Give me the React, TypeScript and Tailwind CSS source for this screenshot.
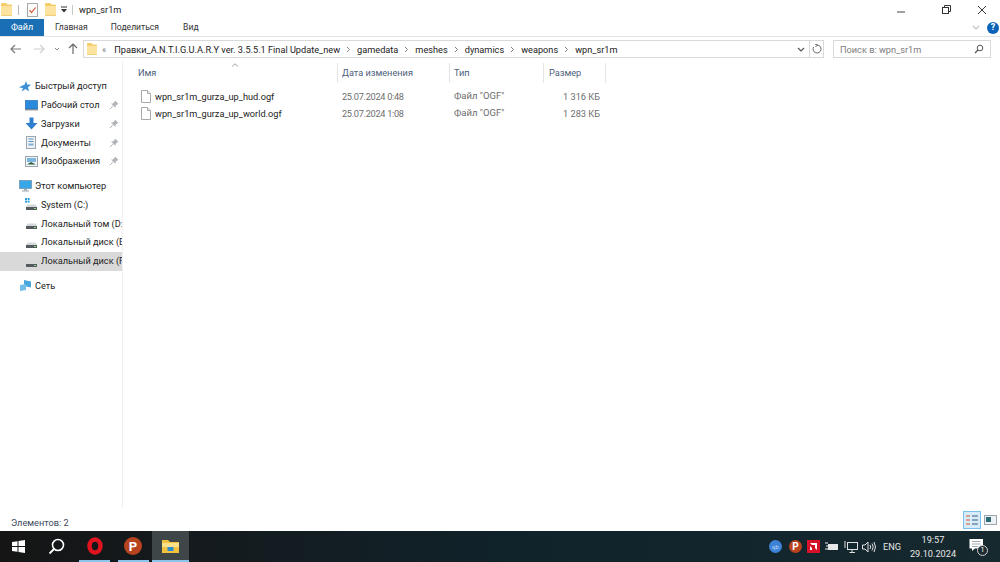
const font = { fontFamily: 'Roboto, "Noto Sans", sans-serif' };

const FolderIcon = ({ w = 11, h = 13 }: { w?: number; h?: number }) => (
  <svg width={w} height={h} viewBox="0 0 11 13" className="shrink-0" preserveAspectRatio="none">
    <path d="M0 1 Q0 0 1 0 H5 L6.5 1.5 H10 Q11 1.5 11 2.5 V13 H0 Z" fill="#f3cd68" />
    <path d="M0 3 H11 V12 Q11 13 10 13 H1 Q0 13 0 12 Z" fill="#fce4a0" />
    <path d="M0.5 12.6 H10.5" stroke="#e8c468" strokeWidth="0.8" />
  </svg>
);

const FileIcon = () => (
  <svg width="10" height="13" viewBox="0 0 10 13" className="shrink-0">
    <path d="M0.5 0.5 H6.5 L9.5 3.5 V12.5 H0.5 Z" fill="#ffffff" stroke="#a8a8a8" />
    <path d="M6.5 0.5 V3.5 H9.5" fill="#f0f0f0" stroke="#a8a8a8" />
  </svg>
);

const PinIcon = () => (
  <svg width="10" height="10" viewBox="0 0 10 10" className="shrink-0">
    <path d="M6 0.5 L9.5 4 L8 4.5 L6.5 6.2 L6.5 8 L2 3.5 L3.8 3.5 L5.5 2 Z" fill="#b0b4b8" />
    <path d="M3.8 6.2 L1 9" stroke="#b0b4b8" strokeWidth="1" />
  </svg>
);

const DriveIcon = ({ system }: { system?: boolean }) => (
  <svg width="13" height="13" viewBox="0 0 13 13" className="shrink-0">
    {system && (
      <g fill="#2b9fe0">
        <rect x="0" y="0" width="2" height="2" />
        <rect x="2.6" y="0" width="2" height="2" />
        <rect x="0" y="2.6" width="2" height="2" />
        <rect x="2.6" y="2.6" width="2" height="2" />
      </g>
    )}
    <path d="M2.5 6.5 L10.5 6.5 L12 9 H1 Z" fill="#d5d8da" />
    <rect x="1" y="9" width="11" height="3" fill="#555a5e" />
    <rect x="9" y="10" width="2" height="1" fill="#8fdc80" />
  </svg>
);

const Chevron = () => (
  <svg width="5" height="7" viewBox="0 0 5 7" className="shrink-0">
    <path d="M1 1 L3.5 3.5 L1 6" fill="none" stroke="#808080" strokeWidth="1" />
  </svg>
);

const DownChevron = ({ color = "#555555" }: { color?: string }) => (
  <svg width="8" height="5" viewBox="0 0 8 5" className="shrink-0">
    <path d="M1 1 L4 4 L7 1" fill="none" stroke={color} strokeWidth="1.2" />
  </svg>
);

const Crumb = ({ label }: { label: string }) => (
  <>
    <span className="mx-[6px]">
      <Chevron />
    </span>
    <span className="pt-[1px] text-[9.2px] text-[#222222]">{label}</span>
  </>
);

const NavItem = ({
  icon,
  label,
  pin,
  level = 1,
  active,
}: {
  icon: React.ReactNode;
  label: string;
  pin?: boolean;
  level?: 0 | 1;
  active?: boolean;
}) => (
  <div className={`flex h-[18.75px] items-center ${active ? "bg-[#d9d9d9]" : ""} ${level === 1 ? "pl-[25px]" : "pl-[19px]"}`}>
    <span className="flex w-[16px] shrink-0 items-center">{icon}</span>
    <span className="min-w-0 flex-1 overflow-hidden whitespace-nowrap text-[9.2px] text-[#222222]">{label}</span>
    {pin && (
      <span className="mr-[3px] flex w-[10px]">
        <PinIcon />
      </span>
    )}
  </div>
);

const App = () => {
  return (
    <div className="flex h-[562px] w-[1000px] flex-col overflow-hidden bg-white" style={font}>
      {/* title bar */}
      <div className="flex h-[19px] shrink-0 items-center pl-[1px]">
        <FolderIcon />
        <div className="ml-[6px] mr-[8px] h-[10px] w-px bg-[#b5b5b5]" />
        <svg width="11" height="14" viewBox="0 0 11 14" className="shrink-0">
          <rect x="0.5" y="0.5" width="10" height="13" fill="#fafafa" stroke="#a8a8a8" />
          <path d="M2.5 7 L4.5 9.5 L8.5 4.5" fill="none" stroke="#d9512c" strokeWidth="1.2" />
        </svg>
        <span className="ml-[7px] flex">
          <FolderIcon />
        </span>
        <svg width="6" height="7" viewBox="0 0 6 7" className="ml-[5px] shrink-0">
          <rect x="0" y="0.5" width="6" height="1" fill="#333333" />
          <path d="M0 3 H6 L3 6.5 Z" fill="#333333" />
        </svg>
        <div className="ml-[5px] mr-[6px] h-[10px] w-px bg-[#c8c8c8]" />
        <span className="pt-[1px] text-[9.2px] text-[#222222]">wpn_sr1m</span>
        <div className="ml-auto flex items-center">
          <svg width="34" height="12" viewBox="0 0 34 12" className="mr-[20px]">
            <path d="M9 8 H17" stroke="#444444" strokeWidth="1" />
          </svg>
          <svg width="9" height="9" viewBox="0 0 9 9" className="mr-[26px]">
            <rect x="0.5" y="2.5" width="6" height="6" fill="none" stroke="#333333" />
            <path d="M2.5 2.5 V0.5 H8.5 V6.5 H6.5" fill="none" stroke="#333333" />
          </svg>
          <svg width="10" height="10" viewBox="0 0 10 10" className="mr-[13px]">
            <path d="M1 1 L9 9 M9 1 L1 9" stroke="#333333" strokeWidth="1" />
          </svg>
        </div>
      </div>

      {/* ribbon tabs */}
      <div className="flex h-[18px] shrink-0 items-center border-b border-[#e3e3e3]">
        <div className="flex h-full w-[44px] items-center justify-center bg-[#1a6fb4] text-[9px] text-white">Файл</div>
        <span className="ml-[11px] text-[8.6px] text-[#333333]">Главная</span>
        <span className="ml-[23px] text-[8.6px] text-[#333333]">Поделиться</span>
        <span className="ml-[24px] text-[8.6px] text-[#333333]">Вид</span>
        <div className="ml-auto mr-[1px] flex items-center gap-[7px]">
          <DownChevron color="#c0c0c0" />
          <div className="flex h-[12px] w-[12px] items-center justify-center rounded-full bg-[#0a63b8] text-[9px] font-bold leading-none text-white">?</div>
        </div>
      </div>

      {/* address row */}
      <div className="flex h-[24px] shrink-0 items-center">
        <svg width="12" height="10" viewBox="0 0 12 10" className="ml-[10px] shrink-0">
          <path d="M5 1 L1 5 L5 9 M1 5 H11" fill="none" stroke="#7a7a7a" strokeWidth="1.2" />
        </svg>
        <svg width="12" height="10" viewBox="0 0 12 10" className="ml-[11px] shrink-0">
          <path d="M7 1 L11 5 L7 9 M11 5 H1" fill="none" stroke="#d0d0d0" strokeWidth="1.2" />
        </svg>
        <span className="ml-[9px]">
          <svg width="6" height="4" viewBox="0 0 6 4" className="block">
            <path d="M1 1 L3 3 L5 1" fill="none" stroke="#888888" strokeWidth="1" />
          </svg>
        </span>
        <svg width="10" height="12" viewBox="0 0 10 12" className="ml-[8px] shrink-0">
          <path d="M1 5 L5 1 L9 5 M5 1 V11" fill="none" stroke="#6a6a6a" strokeWidth="1.2" />
        </svg>
        <div className="ml-[5px] flex h-[18px] w-[741px] shrink-0 items-center border border-[#d9d9d9] pl-[3px]">
          <FolderIcon w={10} h={12} />
          <span className="ml-[5px] pt-[1px] text-[9.2px] text-[#7a7a7a]">«</span>
          <span className="ml-[8px] whitespace-nowrap pt-[1px] text-[9.2px] text-[#222222]">Правки_A.N.T.I.G.U.A.R.Y ver. 3.5.5.1 Final Update_new</span>
          <Crumb label="gamedata" />
          <Crumb label="meshes" />
          <Crumb label="dynamics" />
          <Crumb label="weapons" />
          <Crumb label="wpn_sr1m" />
          <span className="ml-auto mr-[4px]"><DownChevron /></span>
          <div className="flex h-full w-[14px] items-center justify-center border-l border-[#d9d9d9]">
            <svg width="10" height="10" viewBox="0 0 10 10">
              <path d="M5 1 A4 4 0 1 1 1.6 3" fill="none" stroke="#666666" strokeWidth="1" />
              <path d="M3 0 L5.5 1 L3.5 3" fill="none" stroke="#666666" strokeWidth="1" />
            </svg>
          </div>
        </div>
        <div className="ml-[9px] flex h-[18px] w-[158px] shrink-0 items-center border border-[#d9d9d9] pl-[6px] pr-[6px]">
          <span className="pt-[1px] text-[9.2px] text-[#7d7d7d]">Поиск в: wpn_sr1m</span>
          <svg width="10" height="10" viewBox="0 0 10 10" className="ml-auto">
            <circle cx="6" cy="4" r="2.8" fill="none" stroke="#555555" />
            <path d="M4 6 L1 9" stroke="#555555" strokeWidth="1.2" />
          </svg>
        </div>
      </div>

      {/* body */}
      <div className="flex min-h-0 flex-1">
        <div className="w-[123px] shrink-0 border-r border-[#f0f0f0] pt-[16px]">
          <NavItem
            level={0}
            label="Быстрый доступ"
            icon={
              <svg width="12" height="11" viewBox="0 0 12 11">
                <path d="M7 0 L8.2 3.5 L12 3.8 L9 6.3 L10 10.5 L6.5 8 L2.5 10.5 L4 7 L0 6.5 L3.5 4.5 L5.5 3.8 Z" fill="#3d8fd6" />
              </svg>
            }
          />
          <NavItem
            pin
            label="Рабочий стол"
            icon={
              <svg width="13" height="11" viewBox="0 0 13 11">
                <rect x="0.5" y="0.5" width="12" height="8.5" fill="#2a8bdc" stroke="#1a64a8" strokeWidth="0.6" />
                <rect x="0" y="9" width="13" height="1.4" fill="#7f8f9c" />
              </svg>
            }
          />
          <NavItem
            pin
            label="Загрузки"
            icon={
              <svg width="13" height="13" viewBox="0 0 13 13">
                <path d="M4.5 0.5 H8.5 V6 H12.5 L6.5 12.5 L0.5 6 H4.5 Z" fill="#2f7fd0" />
              </svg>
            }
          />
          <NavItem
            pin
            label="Документы"
            icon={
              <svg width="11" height="13" viewBox="0 0 11 13">
                <rect x="1.5" y="0.5" width="9" height="12" fill="#eef2f5" stroke="#9aa7b2" />
                <rect x="3.5" y="2.5" width="5" height="1" fill="#5b93c2" />
                <rect x="3.5" y="5" width="5" height="1" fill="#5b93c2" />
                <rect x="3.5" y="7.5" width="5" height="2" fill="#7fb0d6" />
              </svg>
            }
          />
          <NavItem
            pin
            label="Изображения"
            icon={
              <svg width="13" height="11" viewBox="0 0 13 11">
                <rect x="0.5" y="0.5" width="12" height="10" fill="#f3f6f8" stroke="#9aa5ae" />
                <rect x="2" y="2" width="9" height="4" fill="#7ab6e0" />
                <path d="M2 8.5 L6 6 L11 8.5 Z" fill="#2c5e3f" />
              </svg>
            }
          />
          <div className="h-[6px]" />
          <NavItem
            level={0}
            label="Этот компьютер"
            icon={
              <svg width="13" height="12" viewBox="0 0 13 12">
                <rect x="0.5" y="0.5" width="12" height="8" fill="#37a7ea" stroke="#6d8ca3" strokeWidth="0.7" />
                <rect x="5" y="9" width="3" height="1.5" fill="#9aa7b0" />
                <rect x="3" y="10.5" width="7" height="1" fill="#9aa7b0" />
              </svg>
            }
          />
          <NavItem label="System (C:)" icon={<DriveIcon system />} />
          <NavItem label="Локальный том (D:)" icon={<DriveIcon />} />
          <NavItem label="Локальный диск (E:)" icon={<DriveIcon />} />
          <NavItem active label="Локальный диск (F:)" icon={<DriveIcon />} />
          <div className="h-[6px]" />
          <NavItem
            level={0}
            label="Сеть"
            icon={
              <svg width="13" height="13" viewBox="0 0 13 13">
                <path d="M5 1 L12 2.5 V8.5 L5 7 Z" fill="#4ba6de" />
                <path d="M1 6 L7 5 V11 L1 12 Z" fill="#74bde8" />
              </svg>
            }
          />
        </div>

        {/* file list */}
        <div className="min-w-0 flex-1">
          <div className="relative flex h-[22px] items-end text-[9.2px] text-[#4c607a]">
            <svg width="8" height="4" viewBox="0 0 8 4" className="absolute left-[108px] top-[2px]">
              <path d="M1 3.5 L4 0.8 L7 3.5" fill="none" stroke="#999999" strokeWidth="0.9" />
            </svg>
            <span className="flex h-[20px] w-[215px] items-center border-r border-[#e5e5e5] pl-[15px]">Имя</span>
            <span className="flex h-[20px] w-[112px] items-center border-r border-[#e5e5e5] pl-[4px]">Дата изменения</span>
            <span className="flex h-[20px] w-[94px] items-center border-r border-[#e5e5e5] pl-[4px]">Тип</span>
            <span className="flex h-[20px] w-[62px] items-center border-r border-[#e5e5e5] pl-[5px]">Размер</span>
          </div>
          <div className="mt-[5px] flex flex-col">
            {[
              { name: "wpn_sr1m_gurza_up_hud.ogf", date: "25.07.2024 0:48", size: "1 316 КБ" },
              { name: "wpn_sr1m_gurza_up_world.ogf", date: "25.07.2024 1:08", size: "1 283 КБ" },
            ].map((file) => (
              <div key={file.name} className="flex h-[17px] items-center text-[9.2px] text-[#6d6d6d]">
                <span className="ml-[18px] flex w-[197px] items-center gap-[4px] text-[#222222]">
                  <FileIcon />
                  {file.name}
                </span>
                <span className="w-[112px] pl-[4px] tracking-[-0.3px]">{file.date}</span>
                <span className="w-[84px] pl-[4px] text-[9.5px]">Файл "OGF"</span>
                <span className="w-[66px] text-right">{file.size}</span>
              </div>
            ))}
          </div>
        </div>
      </div>

      {/* status bar */}
      <div className="flex h-[23px] shrink-0 items-center">
        <span className="ml-[11px] mt-[6px] text-[9.2px] text-[#3a4a5c]">Элементов: 2</span>
        <div className="ml-auto flex items-center">
          <div className="flex h-[18px] w-[18px] items-center justify-center border border-[#7cc0ea] bg-[#d6ecfa]">
            <svg width="14" height="12" viewBox="0 0 14 12">
              <path d="M1 2 H5 M1 6 H5 M1 10 H5" stroke="#d8a08a" strokeWidth="2" />
              <path d="M7 2 H13 M7 6 H13 M7 10 H13" stroke="#6f8aa0" strokeWidth="1.4" />
            </svg>
          </div>
          <div className="flex h-[18px] w-[19px] items-center justify-center">
            <svg width="13" height="10" viewBox="0 0 13 10">
              <rect x="0.5" y="0.5" width="12" height="9" fill="#eef2f5" stroke="#9aa5ae" />
              <rect x="2" y="2" width="5" height="5" fill="#2c6a78" />
            </svg>
          </div>
        </div>
      </div>

      {/* taskbar */}
      <div className="flex h-[31px] shrink-0 items-stretch bg-gradient-to-r from-[#151515] via-[#10222a] to-[#16292f]">
        <div className="flex w-[37px] items-center justify-center">
          <svg width="13" height="13" viewBox="0 0 13 13">
            <path d="M0 2 L5.5 1.2 V6 H0 Z M6.5 1 L13 0 V6 H6.5 Z M0 7 H5.5 V11.8 L0 11 Z M6.5 7 H13 V13 L6.5 12 Z" fill="#ffffff" />
          </svg>
        </div>
        <div className="flex w-[38px] items-center justify-center">
          <svg width="17" height="17" viewBox="0 0 17 17">
            <circle cx="10" cy="7" r="5.5" fill="none" stroke="#ffffff" strokeWidth="1.6" />
            <path d="M6 11 L1.5 15.5" stroke="#ffffff" strokeWidth="1.8" />
          </svg>
        </div>
        <div className="flex w-[39px] flex-col items-center justify-end">
          <svg width="18" height="18" viewBox="0 0 18 18" className="mb-[5px]">
            <ellipse cx="9" cy="9" rx="5.5" ry="6.5" fill="none" stroke="#e0141f" strokeWidth="4.5" />
          </svg>
          <div className="h-[2px] w-[31px] bg-[#8ac4ea]" />
        </div>
        <div className="flex w-[38px] flex-col items-center justify-end">
          <div className="mb-[5px] flex h-[18px] w-[18px] items-center justify-center rounded-full bg-[#b8431f] text-[13px] font-bold leading-none text-white">P</div>
          <div className="h-[2px] w-[31px] bg-[#8ac4ea]" />
        </div>
        <div className="flex w-[37px] flex-col items-center justify-end bg-[#3f4648]">
          <svg width="17" height="14" viewBox="0 0 17 14" className="mb-[7px]">
            <path d="M0 1 H6 L8 3 H17 V14 H0 Z" fill="#f2c13d" />
            <rect x="0" y="4" width="17" height="4" fill="#fbe08a" />
            <rect x="5.5" y="8" width="6" height="4" fill="#2b8ed4" />
          </svg>
          <div className="h-[2px] w-full bg-[#8ac4ea]" />
        </div>

        <div className="ml-auto flex items-center">
          <div className="flex h-[13px] w-[13px] items-center justify-center rounded-full bg-[#3d82d6] text-[6px] text-[#bcd8f5]">qb</div>
          <div className="ml-[7px] flex h-[13px] w-[13px] items-center justify-center rounded-full bg-[#b8431f] text-[10px] font-bold leading-none text-white">P</div>
          <div className="ml-[5px] flex h-[13px] w-[13px] items-center justify-center bg-[#d8112a]">
            <svg width="9" height="9" viewBox="0 0 9 9">
              <path d="M1 1 H8 V8 L6 6 V3 H3 Z M1 8 V4 L3 6 V8 Z" fill="#ffffff" />
            </svg>
          </div>
          <svg width="14" height="11" viewBox="0 0 14 11" className="ml-[5px]">
            <rect x="3" y="3" width="10" height="6" fill="#e8e8e8" />
            <path d="M0 2 H3 M1 5 H3 M0 8 H3" stroke="#e8e8e8" strokeWidth="1" />
          </svg>
          <svg width="14" height="12" viewBox="0 0 14 12" className="ml-[5px]">
            <rect x="3.5" y="1.5" width="10" height="7" fill="none" stroke="#e0e0e0" />
            <path d="M8 9 V11.5 M5.5 11.5 H11 M1 0 V7" stroke="#e0e0e0" strokeWidth="1" />
          </svg>
          <svg width="14" height="12" viewBox="0 0 14 12" className="ml-[4px]">
            <path d="M0.5 4 H3 L6 1 V11 L3 8 H0.5 Z" fill="none" stroke="#e0e0e0" />
            <path d="M8 4 Q9.5 6 8 8 M10 2.5 Q12.5 6 10 9.5 M12 1 Q15 6 12 11" fill="none" stroke="#e0e0e0" />
          </svg>
          <span className="ml-[7px] w-[20px] text-[9.2px] text-[#e6e6e6]">ENG</span>
          <div className="ml-[7px] flex w-[46px] flex-col items-center text-[9.2px] leading-[14px] text-[#e6e6e6]">
            <span>19:57</span>
            <span>29.10.2024</span>
          </div>
          <div className="relative ml-[13px] mr-[12px] h-[18px] w-[19px]">
            <svg width="15" height="14" viewBox="0 0 15 14">
              <path d="M0.5 1 H14 V10.5 H6 L3 13 V10.5 H0.5 Z" fill="#ffffff" />
              <path d="M3 3.5 H11.5 M3 6 H11.5 M3 8.5 H9" stroke="#8a9499" strokeWidth="0.8" />
            </svg>
            <div className="absolute right-0 top-[7px] flex h-[11px] w-[11px] items-center justify-center rounded-full border border-[#cfcfcf] bg-[#1d2b31] text-[7px] leading-none text-white">1</div>
          </div>
        </div>
      </div>
    </div>
  );
};

export default App;
